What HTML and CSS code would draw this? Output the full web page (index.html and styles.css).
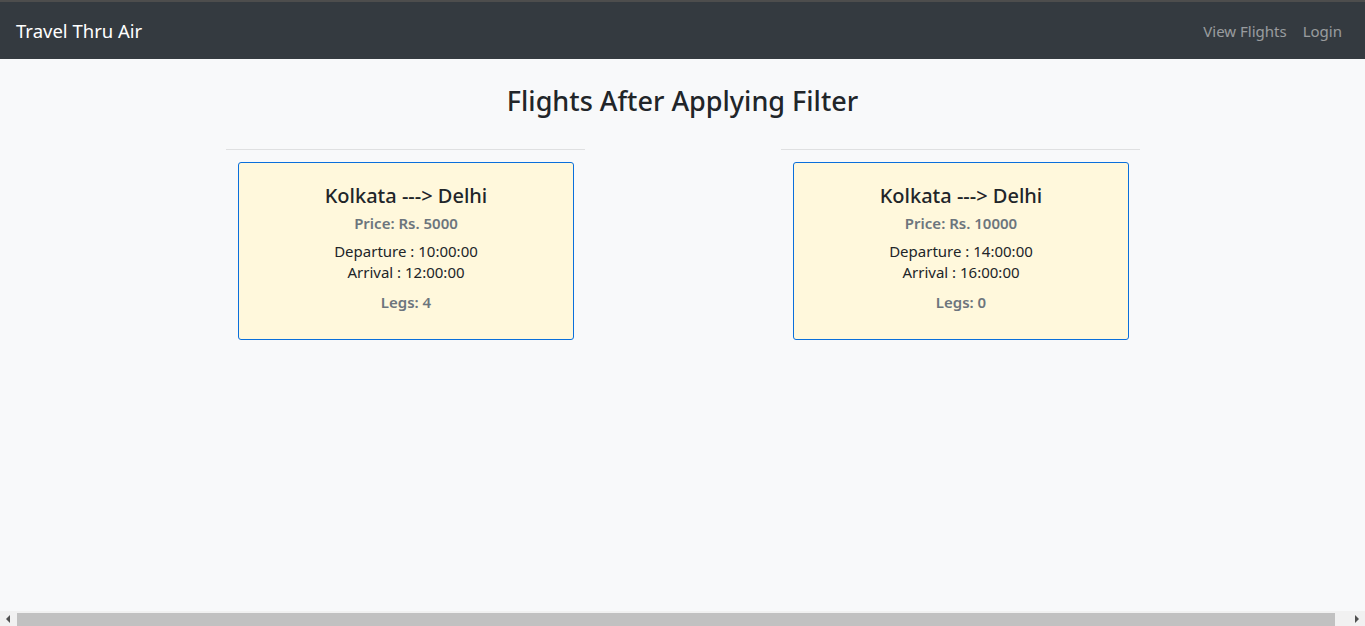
FILE: index.html
```html
<!DOCTYPE html>
<html lang="en">
<head>
<meta charset="utf-8">
<title>Travel Thru Air</title>
<link rel="stylesheet" href="styles.css">
</head>
<body>
<nav class="navbar">
  <a class="brand" href="#">Travel Thru Air</a>
  <ul class="nav">
    <li><a class="nav-link" href="#">View Flights</a></li>
    <li><a class="nav-link" href="#">Login</a></li>
  </ul>
</nav>
<main class="main">
  <h2 class="page-title">Flights After Applying Filter</h2>
  <div class="row">
    <div class="col">
      <hr class="divider">
      <div class="card">
        <h5 class="card-title">Kolkata ---&gt; Delhi</h5>
        <h6 class="card-subtitle">Price: Rs. 5000</h6>
        <p class="card-text">Departure : 10:00:00<br>Arrival : 12:00:00</p>
        <p class="card-legs">Legs: 4</p>
      </div>
    </div>
    <div class="col">
      <hr class="divider">
      <div class="card">
        <h5 class="card-title">Kolkata ---&gt; Delhi</h5>
        <h6 class="card-subtitle">Price: Rs. 10000</h6>
        <p class="card-text">Departure : 14:00:00<br>Arrival : 16:00:00</p>
        <p class="card-legs">Legs: 0</p>
      </div>
    </div>
  </div>
</main>
<div class="hscroll" aria-hidden="true">
  <div class="hscroll-btn">
    <svg width="17" height="15" viewBox="0 0 17 15"><polygon points="6,8 10,4 10,12" fill="#505050"/></svg>
  </div>
  <div class="hscroll-track"><div class="hscroll-thumb"></div></div>
  <div class="hscroll-btn">
    <svg width="17" height="15" viewBox="0 0 17 15"><polygon points="11,8 7,4 7,12" fill="#505050"/></svg>
  </div>
</div>
</body>
</html>
```

FILE: styles.css
```css
* { box-sizing: border-box; }

html { background: #f8f9fa; }

body {
  margin: 0;
  background: #f8f9fa;
  font-family: "Noto Sans", "Open Sans", sans-serif;
  color: #212529;
  font-size: 15px;
}

.navbar {
  display: flex;
  align-items: center;
  justify-content: space-between;
  height: 59px;
  padding: 0 16px;
  background: #343a40;
  border-top: 2px solid #4d4d4d;
}

.brand {
  color: #fff;
  text-decoration: none;
  font-size: 18.5px;
  line-height: 28px;
}

.nav {
  display: flex;
  list-style: none;
  margin: 0;
  padding: 0;
}

.nav-link {
  display: block;
  padding: 0 8px;
  color: rgba(255, 255, 255, 0.5);
  text-decoration: none;
  font-size: 15px;
  line-height: 24px;
}
.nav li:last-child .nav-link { padding-right: 7px; }

.main { padding-top: 25px; }

.page-title {
  margin: 0;
  text-align: center;
  font-size: 27px;
  font-weight: 500;
  line-height: 34px;
}

.row {
  display: flex;
  justify-content: center;
  gap: 196px;
  margin-top: 31px;
  padding-left: 1px;
}

.col {
  width: 359px;
  padding: 0 11px 0 12px;
}

.divider {
  margin: 0 -11px 0 -12px;
  border: 0;
  border-top: 1px solid #dfe0e1;
  height: 0;
}

.card {
  margin-top: 12px;
  height: 178px;
  background: #fff8dc;
  border: 1px solid #0a6fdb;
  border-radius: 3px;
  text-align: center;
  padding-top: 21px;
}

.card-title {
  margin: 0;
  font-size: 20px;
  font-weight: 500;
  line-height: 24px;
}

.card-subtitle {
  margin: 5px 0 0;
  font-size: 15px;
  font-weight: 600;
  line-height: 20px;
  color: #6c757d;
}

.card-text {
  margin: 8px 0 0;
  font-size: 15px;
  line-height: 21px;
}

.card-legs {
  margin: 9px 0 0;
  font-size: 15px;
  font-weight: 600;
  line-height: 21px;
  color: #6c757d;
}

.hscroll {
  position: fixed;
  left: 0;
  right: 0;
  bottom: 0;
  height: 15px;
  display: flex;
  background: #f1f1f1;
}

.hscroll-btn {
  width: 17px;
  flex: none;
  display: flex;
}

.hscroll-track {
  flex: 1;
  padding-top: 2px;
}

.hscroll-thumb {
  width: 1318px;
  height: 13px;
  background: #c1c1c1;
}
```
